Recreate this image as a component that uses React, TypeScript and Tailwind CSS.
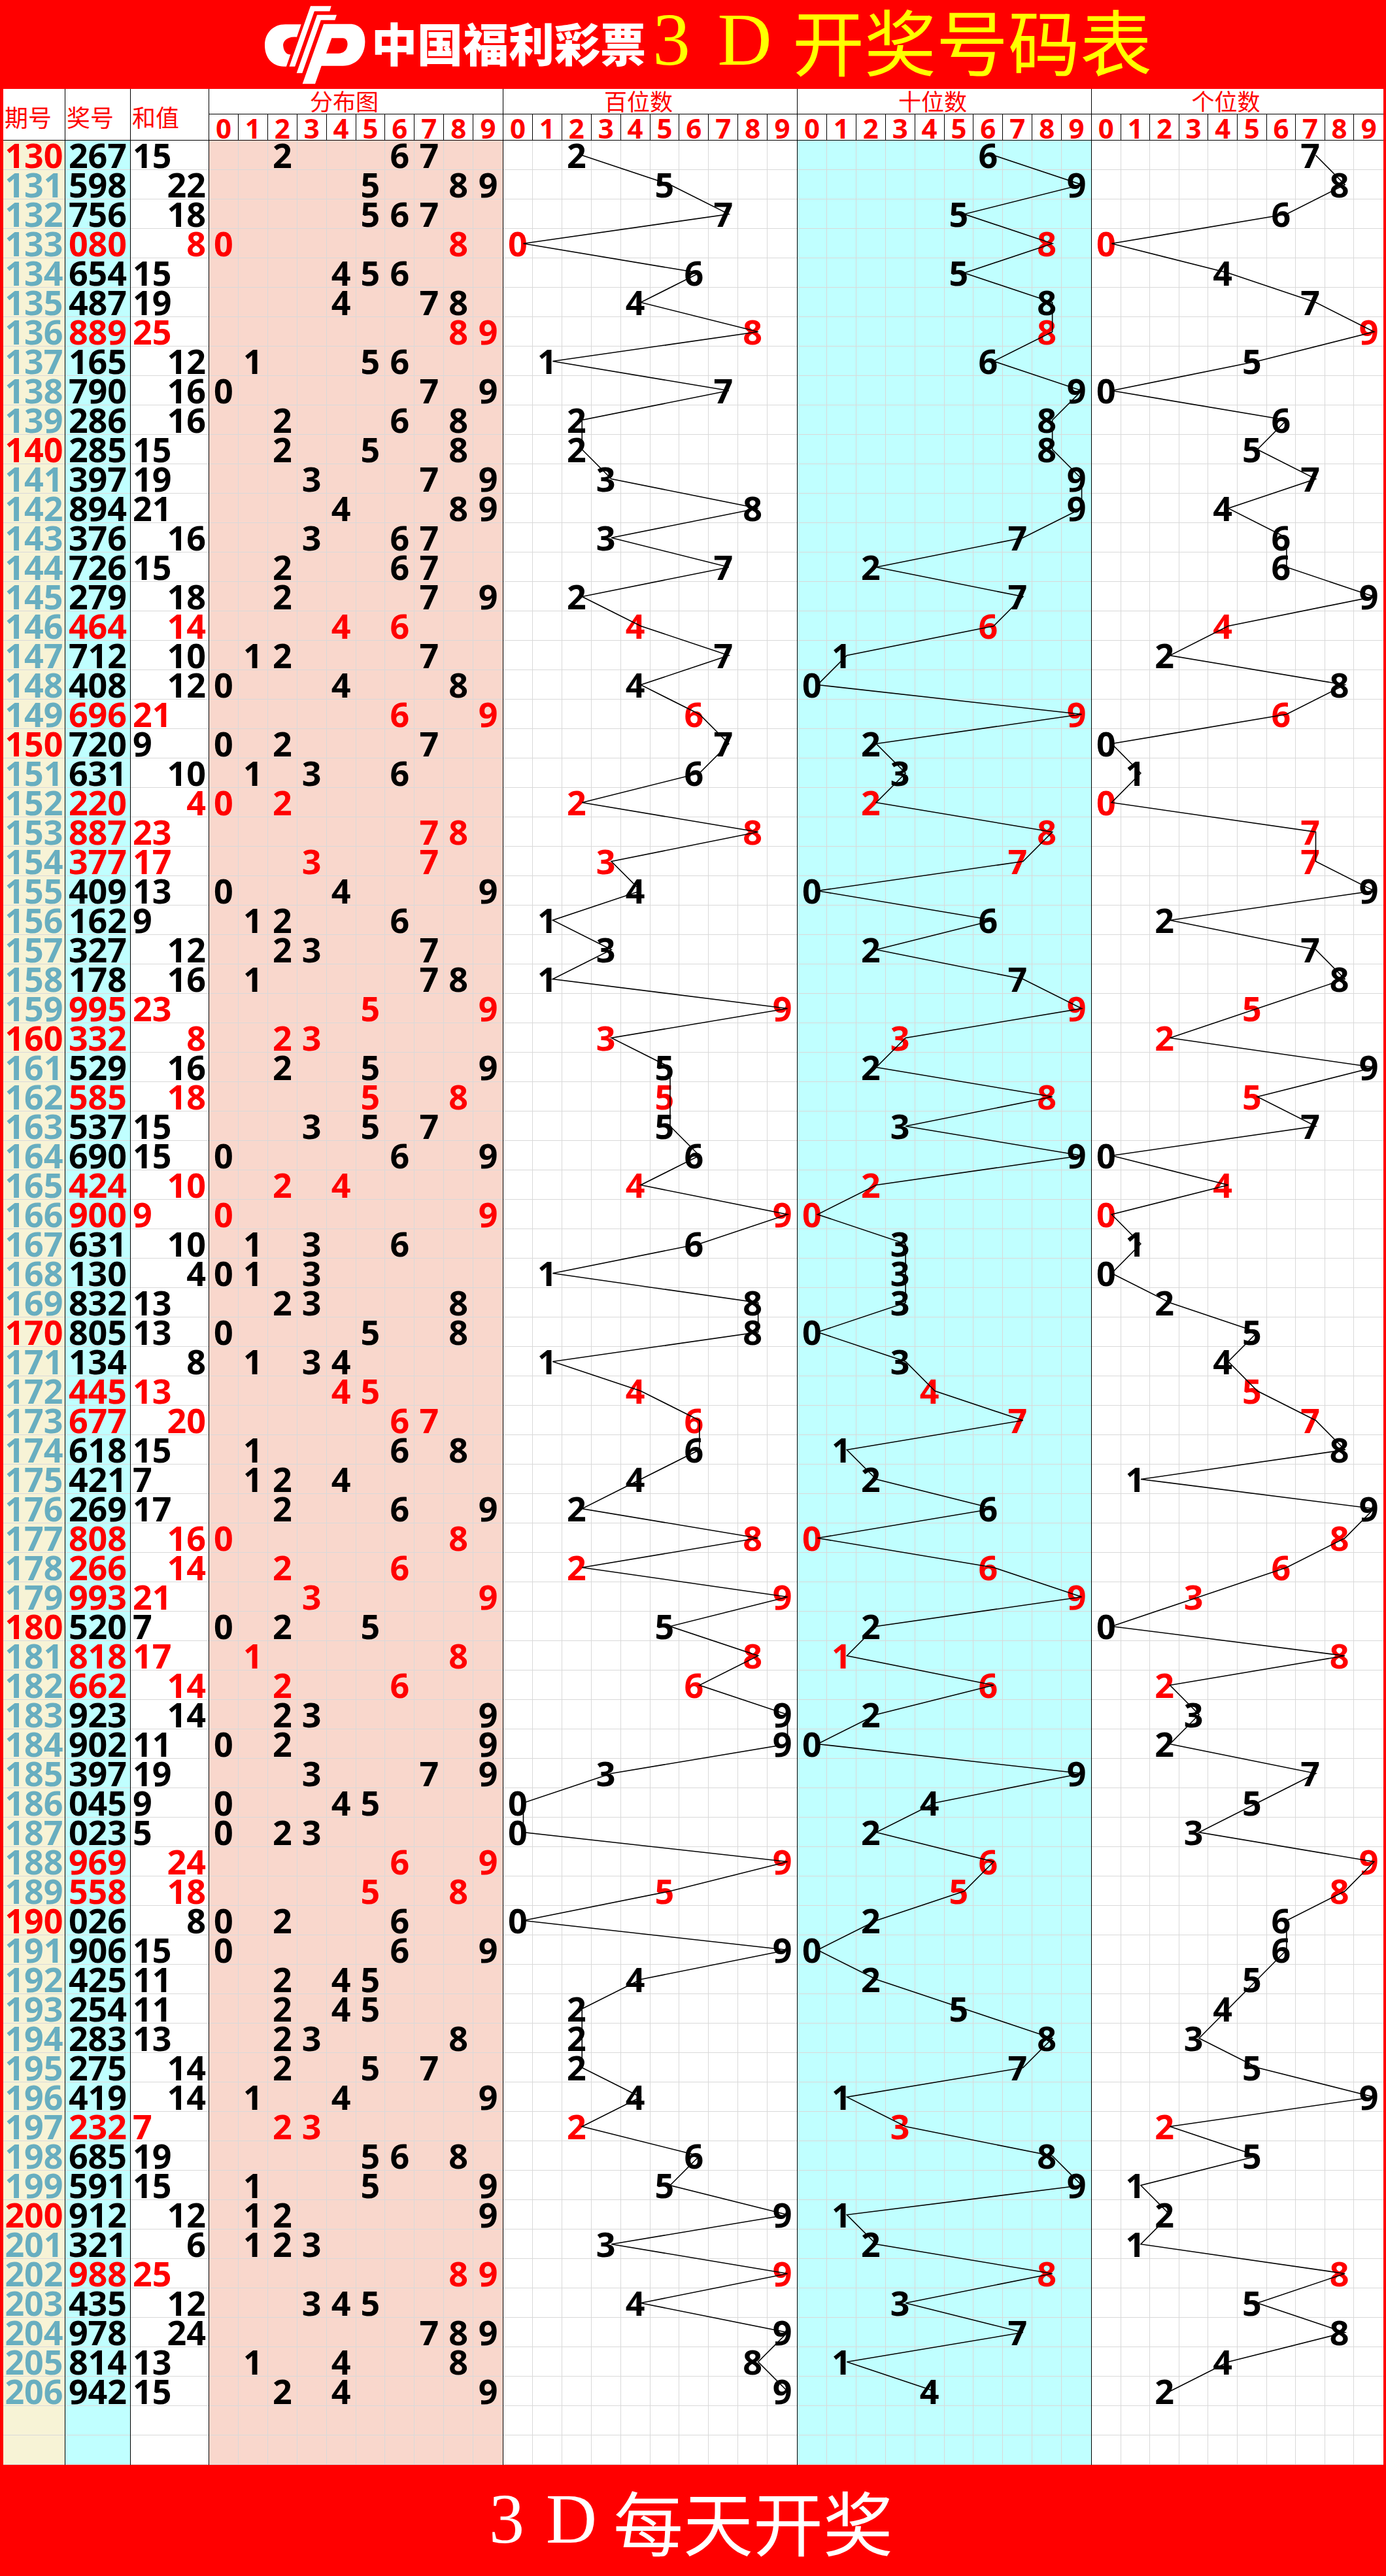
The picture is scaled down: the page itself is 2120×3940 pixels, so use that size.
import React from "react"

const RAW =
  "130 267,131 598,132 756,133 080,134 654,135 487,136 889,137 165,138 790,139 286,140 285,141 397,142 894,143 376,144 726,145 279,146 464,147 712,148 408,149 696,150 720,151 631,152 220,153 887,154 377,155 409,156 162,157 327,158 178,159 995,160 332,161 529,162 585,163 537,164 690,165 424,166 900,167 631,168 130,169 832,170 805,171 134,172 445,173 677,174 618,175 421,176 269,177 808,178 266,179 993,180 520,181 818,182 662,183 923,184 902,185 397,186 045,187 023,188 969,189 558,190 026,191 906,192 425,193 254,194 283,195 275,196 419,197 232,198 685,199 591,200 912,201 321,202 988,203 435,204 978,205 814,206 942"

interface Draw {
  issue: number
  num: string
  digits: number[]
  sum: number
  pair: boolean
}

const DATA: Draw[] = RAW.split(",").map((item) => {
  const [p, n] = item.split(" ")
  const digits = n.split("").map(Number)
  return {
    issue: Number(p),
    num: n,
    digits,
    sum: digits.reduce((a, b) => a + b, 0),
    pair: new Set(digits).size < 3,
  }
})

// two blank rows sit under the last draw
const TOTAL = DATA.length + 2
const ROW_H = 45
const DIGITS = [0, 1, 2, 3, 4, 5, 6, 7, 8, 9]

const NUM = "font-['Open_Sans','Liberation_Sans',sans-serif] font-bold"
const CJK = "font-['Noto_Sans_CJK_SC',sans-serif]"
const SERIF = "font-['Liberation_Serif','Noto_Sans_CJK_SC',serif]"

function Logo() {
  return (
    <svg viewBox="30 0 465 408" className="h-[136px] w-[155px] flex-none" fill="#ffffff">
      <path d="M197 112 L177 170 C130 165 110 192 115 214 C118 238 132 252 148 250 L129 305 L118 305 C62 305 30 262 30 208 C30 152 68 112 124 112 Z" />
      <path d="M240 28 L335 28 L328 52 L257.5 52 L168.5 305 L142.5 305 Z" />
      <path d="M270 68 L360 68 L352 92 L287.5 92 L202 335 L176 335 Z" />
      <path
        fillRule="evenodd"
        d="M300 110 L420 110 C468 110 492 145 490 195 C488 258 448 302 388 302 L290 302 L261 385 L203 385 Z M337 175 L388 175 C405 175 412 192 409 210 C405 232 390 245 368 245 L312 245 Z"
      />
    </svg>
  )
}

function Solo({
  title,
  width,
  bg,
  cell,
}: {
  title: string
  width: string
  bg: string
  cell: (row: Draw) => React.ReactNode
}) {
  return (
    <div className={`flex flex-none flex-col border-r border-black ${width}`}>
      <div className={`flex h-[79px] items-center border-b border-black bg-white pl-[2px] pt-[6px] text-[36px] leading-[40px] text-[#ff0000] ${CJK}`}>
        {title}
      </div>
      <div className={bg}>
        {Array.from({ length: TOTAL }).map((_, i) => (
          <div key={i} className={`flex h-[45px] border-b border-[#d9d9d9] text-[52px] leading-[44px] ${NUM}`}>
            {DATA[i] ? cell(DATA[i]) : null}
          </div>
        ))}
      </div>
    </div>
  )
}

function Group({
  title,
  bg,
  width,
  innerW,
  last,
  pos,
}: {
  title: string
  bg: string
  width: string
  innerW: number
  last?: boolean
  pos?: number
}) {
  const points = pos === undefined
    ? ""
    : DATA.map((r, i) => `${((r.digits[pos] + 0.5) * innerW) / 10 + 8},${i * ROW_H + ROW_H / 2}`).join(" ")

  return (
    <div className={`flex flex-none flex-col ${width} ${last ? "" : "border-r border-black"}`}>
      <div className={`flex h-[39px] items-center justify-center border-b border-black bg-white pb-[3px] pr-[36px] text-[35px] leading-[36px] text-[#ff0000] ${CJK}`}>
        {title}
      </div>
      <div className="grid h-[40px] grid-cols-10 border-b border-black bg-white">
        {DIGITS.map((d) => (
          <div
            key={d}
            className={`flex items-center justify-center pt-[3px] text-[42px] leading-[36px] text-[#ff0000] ${NUM} ${d < 9 ? "border-r border-black" : ""}`}
          >
            {d}
          </div>
        ))}
      </div>
      <div className={`relative ${bg}`}>
        {Array.from({ length: TOTAL }).map((_, i) => {
          const r = DATA[i]
          return (
            <div key={i} className="grid h-[45px] grid-cols-10 border-b border-[#d9d9d9]">
              {DIGITS.map((d) => {
                const show = r && (pos === undefined ? r.digits.includes(d) : r.digits[pos] === d)
                return (
                  <div
                    key={d}
                    className={`flex items-center justify-center text-[52px] leading-[44px] ${NUM} ${d < 9 ? "border-r border-[#d9d9d9]" : ""}`}
                  >
                    {show ? <span className={r.pair ? "text-[#ff0000]" : "text-black"}>{d}</span> : null}
                  </div>
                )
              })}
            </div>
          )
        })}
        {pos !== undefined && (
          <svg
            className="pointer-events-none absolute inset-0 h-full w-full"
            viewBox={`0 0 ${innerW} ${TOTAL * ROW_H}`}
            preserveAspectRatio="none"
          >
            <polyline points={points} fill="none" stroke="#000000" strokeWidth={1.6} vectorEffect="non-scaling-stroke" />
          </svg>
        )}
      </div>
    </div>
  )
}

export default function App() {
  return (
    <div className="flex w-[2120px] flex-col bg-[#ff0000]">
      <header className="flex h-[136px] items-center pl-[405px]">
        <Logo />
        <span className={`mb-[7px] ml-[8px] text-[70px] font-black leading-[84px] text-white ${CJK}`}>中国福利彩票</span>
        <span className={`mb-[14px] w-[78px] text-center text-[115px] leading-[120px] text-[#ffff00] ${SERIF}`}>3</span>
        <span className={`mb-[14px] w-[146px] text-center text-[115px] leading-[120px] text-[#ffff00] ${SERIF}`}>D</span>
        <span className={`mb-[16px] text-[110px] leading-[120px] text-[#ffff00] ${CJK}`}>开奖号码表</span>
      </header>

      <div className="ml-[5px] mr-[4px] flex bg-white">
        <Solo
          title="期号"
          width="w-[95px]"
          bg="bg-[#f7f3d6]"
          cell={(r) => (
            <span className={`flex w-full items-center justify-center ${r.issue % 10 === 0 ? "text-[#ff0000]" : "text-[#68aec0]"}`}>{r.issue}</span>
          )}
        />
        <Solo
          title="奖号"
          width="w-[100px]"
          bg="bg-[#c0ffff]"
          cell={(r) => (
            <span className={`flex w-full items-center justify-center ${r.pair ? "text-[#ff0000]" : "text-black"}`}>{r.num}</span>
          )}
        />
        <Solo
          title="和值"
          width="w-[120px]"
          bg="bg-white"
          cell={(r) => (
            <span
              className={`flex w-full items-center ${r.sum % 2 === 1 ? "justify-start pl-[3px]" : "justify-end pr-[4px]"} ${r.pair ? "text-[#ff0000]" : "text-black"}`}
            >
              {r.sum}
            </span>
          )}
        />
        <Group title="分布图" bg="bg-[#f9d7cc]" width="w-[450px]" innerW={449} />
        <Group title="百位数" bg="bg-white" width="w-[450px]" innerW={449} pos={0} />
        <Group title="十位数" bg="bg-[#c0ffff]" width="w-[450px]" innerW={449} pos={1} />
        <Group title="个位数" bg="bg-white" width="w-[446px]" innerW={446} pos={2} last />
      </div>

      <footer className="flex h-[170px] items-center pl-[740px] text-white">
        <span className={`mb-[4px] w-[70px] text-center text-[108px] leading-[120px] ${SERIF}`}>3</span>
        <span className={`mb-[4px] w-[128px] text-center text-[108px] leading-[120px] ${SERIF}`}>D</span>
        <span className={`text-[107px] leading-[120px] ${CJK}`}>每天开奖</span>
      </footer>
    </div>
  )
}
